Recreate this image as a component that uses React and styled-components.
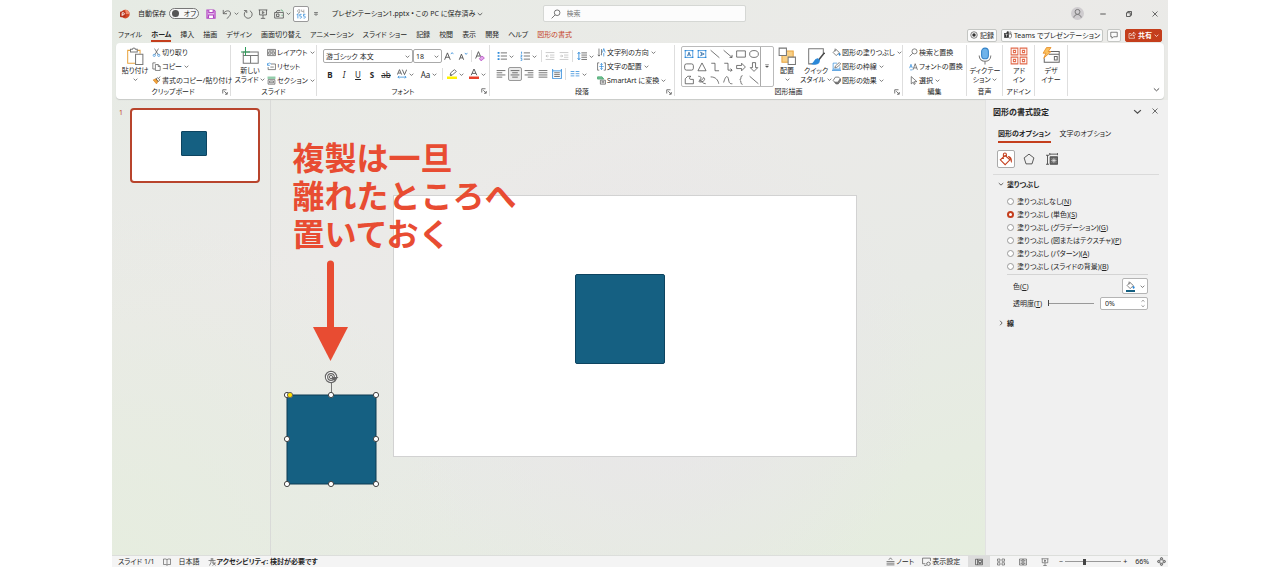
import { useState } from "react";
import styled, { createGlobalStyle } from "styled-components";

const gray = "#4a4a4a";
const blue = "#2b88d8";
const accent = "#c43e1c";

const tabs = [
  "ファイル",
  "ホーム",
  "挿入",
  "描画",
  "デザイン",
  "画面切り替え",
  "アニメーション",
  "スライド ショー",
  "記録",
  "校閲",
  "表示",
  "開発",
  "ヘルプ",
  "図形の書式",
];

const fills = [
  ["塗りつぶしなし", "N"],
  ["塗りつぶし (単色)", "S"],
  ["塗りつぶし (グラデーション)", "G"],
  ["塗りつぶし (図またはテクスチャ)", "P"],
  ["塗りつぶし (パターン)", "A"],
  ["塗りつぶし (スライドの背景)", "B"],
];

// every icon is drawn on a 16 x 16 grid
const icons = {
  logo: (
    <>
      <circle cx="8.5" cy="8" r="7" fill="#d24726" stroke="none" />
      <path d="M8.5 1a7 7 0 0 1 7 7h-7z" fill="#f08a6c" stroke="none" />
      <rect x="0" y="4" width="9" height="9" rx="1.5" fill="#b7311a" stroke="none" />
      <path d="M3.400 11V6h2a1.600 1.600 0 0 1 0 3.200h-2" stroke="#fff" strokeWidth="1.400" />
    </>
  ),
  save: (
    <g stroke="#b146c2" strokeWidth="1.8">
      <path d="M1.5 1.5h11l2 2v11h-13z" fill="#e3b5ea" />
      <path d="M4.5 1.5v4h7v-4M4 14.5V9.500h8v5" fill="#fff" />
    </g>
  ),
  undo: <path d="M2 1.500V7.500H8M2.300 7.200C6 1 14.500 2 13.500 8c-.5 3-3 5-6 7.500" />,
  redo: <path d="M1.500 2.500H6v4M4.500 3.500A6.300 6.300 0 1 0 11 2.800" />,
  present: <path d="M1 1.500h14M2.500 1.500v8h11v-8M8 9.500v5M4.500 15h7M7 4l3 1.700L7 7.300z" />,
  camera: (
    <>
      <path d="M1 5.500h14v9H1zM3 5.500l2-3h5M4 8h4v4H4z" />
      <path d="M11 1l4 3M12 10h2" stroke="#3a9a5c" />
    </>
  ),
  touch: (
    <>
      <path d="M6 1.500a2.200 2.200 0 1 0 0 3.500M6 1v2c0 3-1 4-3 4.500M9 1v3h3.500M12.500 1v6" stroke="#999" />
      <path d="M1 9l2-1v7M9 8.500H6v3c4-1 4 4 0 3M15 8.500h-3v3c4-1 4 4 0 3" stroke={blue} />
    </>
  ),
  find: <path d="M9.800 1.500a4.500 4.500 0 1 1 0 9 4.500 4.500 0 0 1 0-9zM6.500 9.500L1 15" />,
  person: (
    <>
      <circle cx="8" cy="8" r="8" fill="#cfcccf" stroke="none" />
      <circle cx="8" cy="6" r="3" stroke="#777" />
      <path d="M3.500 13c.5-5 8.500-5 9 0" stroke="#777" />
    </>
  ),
  minimize: <path d="M2.500 8h11" stroke="#333" strokeWidth="1.6" />,
  restore: <path d="M3 5.500h7.500V13H3zM5.500 5.500V3H13v7.500h-2.500" stroke="#333" strokeWidth="1.5" />,
  close: <path d="M3 3l10 10M13 3L3 13" stroke="#333" strokeWidth="1.4" />,
  paste: (
    <>
      <path d="M8 14.500H1.500V3H4M10 3h2.500v3" stroke="#e8a33d" />
      <path d="M4 4.500V2h1.700a1.400 1.400 0 0 1 2.700 0H10v2.500z" stroke="#777" />
      <path d="M8.500 6.500H15v9H8.500z" fill="#fff" stroke="#777" />
    </>
  ),
  cut: (
    <>
      <path d="M4.500 1l6.500 11M11.500 1L5 12" />
      <path d="M4 11a2 2 0 1 1 0 4 2 2 0 0 1 0-4zM12 11a2 2 0 1 1 0 4 2 2 0 0 1 0-4z" stroke={blue} />
    </>
  ),
  copy: <path d="M5.500 12.500h-4v-11h5M6 4.500h5l3.500 3.500v7H6zM11 4.500V8h3.500" />,
  painter: (
    <>
      <path d="M2 7l6 7 3-5-4-4z" fill="#f2a33a" stroke="#d8862a" />
      <path d="M7 5l3-2 4 4-3 3zM12 4l2.500-3" />
    </>
  ),
  newSlide: (
    <>
      <path d="M2 4.500h13.300v10H2zM2 7.500h13.300M8.500 7.500v7" stroke="#777" />
      <path d="M4 0v8M0 4.500h8" stroke="#2e9e5b" />
    </>
  ),
  layout: <path d="M1 2.500h14v11H1zM3 5h10M3 7h4v4H3zM9 7h4v4H9z" />,
  reset: (
    <>
      <path d="M7 3.500h8v10H2V9M6 9h6" />
      <path d="M1 5.500C2 1 6 1 7 4M1 2v4h4" stroke={blue} />
    </>
  ),
  section: (
    <>
      <path d="M2 6.500h12v8H2zM4.500 9h7v3h-7z" />
      <path d="M1 2h14M1 4h14" stroke="#2e9e5b" />
    </>
  ),
  growFont: (
    <>
      <path d="M1 14L5.500 3 10 14M2.700 10h5.600" strokeWidth="1.400" />
      <path d="M11 5l2-2.500L15 5" stroke={blue} />
    </>
  ),
  shrinkFont: (
    <>
      <path d="M2 14l3.500-9L9 14M3.400 11h4.400" strokeWidth="1.400" />
      <path d="M11 3l2 2.500L15 3" stroke={blue} />
    </>
  ),
  clearFont: (
    <>
      <path d="M1 12L5.500 1 9 9M2.700 8h5.600" strokeWidth="1.400" />
      <path d="M7 12l4-4 4 3-4 4H9z" fill="#e3a8ea" stroke="#b146c2" />
    </>
  ),
  spacing: (
    <>
      <path d="M.5 9L4 1l3.500 8M2 6.500h4M8.500 1L12 9l3.500-8" strokeWidth="1.300" />
      <path d="M1.500 13h13M3.500 11l-2 2 2 2M12.500 11l2 2-2 2" stroke={blue} />
    </>
  ),
  highlight: (
    <>
      <path d="M5 10l1-4 6-5 3 3-6 5zM5 10h3" />
      <path d="M0 14h16" stroke="#fff200" strokeWidth="4" />
    </>
  ),
  fontColor: (
    <>
      <path d="M3.500 10L8 0l4.500 10M5 7h6" strokeWidth="1.400" />
      <path d="M0 14h16" stroke="#e8402a" strokeWidth="4" />
    </>
  ),
  bullets: (
    <>
      <path d="M6 3h10M6 8h10M6 13h10" />
      <path d="M1 3h3M1 8h3M1 13h3" stroke={blue} strokeWidth="2.600" />
    </>
  ),
  numbers: (
    <>
      <path d="M6 3h10M6 8h10M6 13h10" />
      <path d="M1.500 2l1-.5v3M1 6.500h2v1.500l-2 1.500h2.500M1 12h2v3H1" stroke={blue} />
    </>
  ),
  outdent: <path d="M1 2.500h14M8 6.500h7M8 10h7M1 13.500h14M6 8H1.500M3.500 6l-2 2 2 2" stroke="#bbb" />,
  indent: <path d="M1 2.500h14M8 6.500h7M8 10h7M1 13.500h14M1.500 8H6M4 6l2 2-2 2" stroke="#bbb" />,
  lineSpacing: (
    <>
      <path d="M7 3h9M7 6.500h9M7 10h9M7 13.500h9" />
      <path d="M3 2v12M1 4.500L3 2l2 2.500M1 11.500L3 14l2-2.500" stroke={blue} strokeWidth="1.400" />
    </>
  ),
  left: <path d="M1 2.500h14M1 6h9M1 9.500h14M1 13h9" />,
  center: <path d="M1 2.500h14M3.500 6h9M1 9.500h14M3.500 13h9" />,
  right: <path d="M1 2.500h14M6 6h9M1 9.500h14M6 13h9" />,
  justify: <path d="M1 2.500h14M1 6h14M1 9.500h14M1 13h14" />,
  distribute: (
    <>
      <path d="M3.500 6h9M3.500 9h9M3.500 12h9" />
      <path d="M1 0v15.500h14V0M1 3h14" stroke={blue} strokeWidth="1.400" />
    </>
  ),
  columns: <path d="M1 4h6M1 7.500h6M1 11h6M9 4h6M9 7.500h6M9 11h6" stroke={blue} />,
  textDirection: (
    <>
      <path d="M3.500 1v13M1.500 12l2 2.500 2-2.500M8 2v11" />
      <path d="M9.500 8L12 1l2.500 7M12 9v6" stroke={blue} strokeWidth="1.300" />
    </>
  ),
  textAlign: (
    <>
      <path d="M4 1.500H1v13h3M12 1.500h3v13h-3" />
      <path d="M4 8h8M8 2.500v11M6 5l2-2.500L10 5M6 11l2 2.500 2-2.500" stroke={blue} />
    </>
  ),
  smartArt: (
    <>
      <path d="M1 1.500h8l3 4H1z" fill="#7bc29a" stroke="#2e9e5b" />
      <path d="M6 7.500h9v7H6zM8 10h5M8 12h5" fill="#fff" />
    </>
  ),
  textBox: (
    <>
      <path d="M2 2.500h12v11H2z" stroke={blue} />
      <path d="M5.500 11.500L8 5l2.500 6.500M6.500 9.500h3" stroke="#1a5c9c" />
      <path d="M1 1.500h2.500v2H1zM12.500 1.500H15v2h-2.500zM1 12.500h2.500v2H1zM12.500 12.500H15v2h-2.500z" fill={blue} stroke="none" />
    </>
  ),
  textBoxV: (
    <>
      <path d="M2 2.500h12v11H2z" stroke={blue} />
      <path d="M5 5l6.500 3L5 11M7 6v4" stroke="#1a5c9c" />
      <path d="M1 1.500h2.500v2H1zM12.500 1.500H15v2h-2.500zM1 12.500h2.500v2H1zM12.500 12.500H15v2h-2.500z" fill={blue} stroke="none" />
    </>
  ),
  line: <path d="M1 2l14 12" />,
  lineArrow: <path d="M1 2l13.500 11.500M14.500 9.500v4h-4" />,
  rect: <path d="M1 3h14v10H1z" />,
  oval: <ellipse cx="8" cy="8" rx="7" ry="5.500" />,
  roundRect: <rect x="1" y="3" width="14" height="10" rx="3" />,
  triangle: <path d="M8 1.500l6.500 12.500h-13z" />,
  elbow: <path d="M2 2h6v12h6.500" />,
  elbowArrow: <path d="M2 2h6v11h6.500M12 10.500l2.500 2.500-2.500 2.500" />,
  arrowRight: <path d="M1 5.500h8V2l6 6-6 6v-3.500H1z" />,
  arrowDown: <path d="M5.500 1v8H2l6 6 6-6h-3.500V1z" />,
  freeform: <path d="M2 14V6l4-4h5c-3 2-3 5 0 5h4v7z" />,
  scribble: <path d="M2 2c3 0 7 2 3 5-3 3 5 1 5-2s5 2 0 5-9 0-6-1c5 0 4 5 10 5" />,
  arc: <path d="M1 3c8 0 12 5 13 11" />,
  curve: <path d="M1 12C5-2 8 2 9 8s3 6 6 6" />,
  brace: <path d="M10.500 1C6 1 9.500 7 6 8c3.500 1 0 7 4.500 7" />,
  arrange: (
    <>
      <path d="M3.500 3.500h10v10h-10z" fill="#f8cf85" stroke="#e8a33d" />
      <path d="M1 1h6.500v6.500H1zM9 9h6.500v6.500H9z" fill="#fff" stroke="#777" />
    </>
  ),
  quickStyle: (
    <>
      <path d="M6 15H1.500V1.500h13V6" stroke="#777" />
      <path d="M15.500 5L10 12" strokeWidth="1.400" />
      <path d="M9.500 10.500c-3 0-2.500 3.500-5 4.500 3.500 1 6.500 0 6.500-3z" fill={blue} stroke={blue} />
    </>
  ),
  fill: (
    <>
      <path d="M7 2.500L13 8l-5.500 5.500L2 8zM5.500 1v5" />
      <path d="M13.500 9c2 3 1.500 4 0 4s-2-1 0-4z" fill={blue} stroke={blue} />
    </>
  ),
  outline: (
    <>
      <path d="M14 8v4.500H2V2h7" stroke={blue} />
      <path d="M5 10.500l1-3.500 7-6 2.500 2.500-7 6z" />
      <path d="M0 14.500h16" stroke={blue} strokeWidth="2" />
    </>
  ),
  effect: (
    <>
      <path d="M4 10l3 4h4l4-5V5" fill="#888" />
      <path d="M6 2h6l2.500 3-4 6H5L2 8z" fill="#fff" />
    </>
  ),
  replaceFont: (
    <>
      <path d="M7 14L11 3l4 11M8.500 10.500h5" />
      <path d="M1 11l2.500-7L6 11M2 8.500h3M2 14h4" stroke={blue} />
    </>
  ),
  select: <path d="M4 1v13l3.500-3 1.500 4 2-1-1.500-4H14z" />,
  mic: (
    <>
      <rect x="5" y="1" width="6" height="9.500" rx="3" fill="#6fb3ea" stroke="#2f7fc6" />
      <path d="M2.800 7.500c0 7 10.400 7 10.400 0M8 12.800V15.500" stroke="#777" />
    </>
  ),
  addin: <path d="M1 1h6v6H1zM9 1h6v6H9zM1 9h6v6H1zM9 9h6v6H9zM3 3h2v2H3zM11 3h2v2h-2zM3 11h2v2H3zM11 11h2v2h-2z" stroke="#e2694a" />,
  designer: (
    <>
      <path d="M6 4h9.300v9.500H2V10M6 6.500h9.300M11 8.500h2.500v3H11z" stroke="#666" />
      <path d="M4 .5h4L5.500 4H8l-6.500 6L3.500 5.500H1z" fill="#fbc15e" stroke="#e8902d" strokeWidth=".8" />
    </>
  ),
  record: (
    <>
      <circle cx="8" cy="8" r="6.500" stroke="#333" />
      <circle cx="8" cy="8" r="3.500" fill="#333" stroke="none" />
    </>
  ),
  teams: (
    <>
      <path d="M10 6h5v6c-1 2.500-4 2.500-6 1M11 2a2 2 0 1 1 0 3.500" />
      <circle cx="7.500" cy="3" r="2" fill="#333" />
      <rect x="1" y="5" width="8" height="8" fill="#333" stroke="#333" />
      <path d="M3 7h4M5 7v4.500" stroke="#fff" />
    </>
  ),
  comment: <path d="M1.500 2.500h13v9H7L4 14.500v-3H1.500z" stroke="#333" />,
  share: <path d="M6 5H2v9.500h11V11M5 10c1-4 4-5 6-5V2l4 4.500-4 4V8c-3 0-4.500 0-6 2z" stroke="#fff" />,
  bucket: (
    <>
      <path d="M7 4l5.500 5L7 14.500 1.500 9zM5 8V3c0-2.500 3.500-2.500 3.500 0v2.500" stroke={accent} />
      <path d="M10 4.500c3.500 0 5.500 3 4.500 8-1.500-1-1-4-2.500-5z" fill={accent} stroke="none" />
    </>
  ),
  pentagon: <path d="M8 1.500l6.500 5-2.500 8H4l-2.500-8z" />,
  sizeIcon: (
    <>
      <path d="M0 3h4M2 3v12M0 15h4M5 1.500h10.500M5 0v3M15.500 0v3" />
      <path d="M5.500 5h10v10h-10z" fill="#666" />
      <path d="M10.500 6.500v7M7 10h7M8 7.500l5 5M13 7.500l-5 5" stroke="#eee" strokeWidth=".8" />
    </>
  ),
  book: <path d="M1 2h5l2 1.500L10 2h5v11h-5l-2 1.500L6 13H1zM8 3.500v11" />,
  access: <path d="M6 2a2 2 0 1 1 4 0 2 2 0 0 1-4 0zM1 5h14M6 5v4l-3 6M10 5v4M8 10h7l-6 5M15 15l-5-6" />,
  notes: <path d="M5 5l3-3.500L11 5M1 8h14M1 11h14M1 14h14" />,
  display: <path d="M6 12H1V2h14v5M4 15h4M11.500 9l3 1.500v3l-3 1.500-3-1.500v-3z" />,
  normal: <path d="M1 2.500h14v11H1zM5 2.500v11M7 5h6v4H7zM7 11h6" stroke="#333" />,
  sorter: <path d="M1 2h5v4.500H1zM10 2h5v4.500h-5zM1 9.500h5V14H1zM10 9.500h5V14h-5z" />,
  reading: <path d="M1 2h7v12H1zM8 2h7v12H8zM3 5h3M3 8h3M3 11h3M10 5h3M10 8h3M10 11h3" />,
  fit: <path d="M8 0l2.500 3.500h-5zM8 16l2.500-3.500h-5zM0 8l3.500-2.500v5zM16 8l-3.500-2.500v5zM5 5h6v6H5z" />,
  chevron: <path d="M2 5.500L8 11l6-5.500" strokeWidth="2.200" />,
  overflow: <path d="M3 4h10M4 8l4 4 4-4z" strokeWidth="1.800" />,
  more: <path d="M3 4h10M4 8h8l-4 4z" fill={gray} />,
  launcher: <path d="M2 12V2h10M6 6l7 7M14 8v6H8" strokeWidth="2" />,
};

const Icon = ({ name, size = 10 }) => (
  <Svg viewBox="0 0 16 16" $size={size} aria-hidden="true">
    {icons[name]}
  </Svg>
);

const Chevron = () => <Icon name="chevron" size={5} />;

const Tool = ({ icon, children, menu }) => (
  <ToolButton>
    <Icon name={icon} size={9} />
    {children}
    {menu && <Chevron />}
  </ToolButton>
);

const Group = ({ title, width, pad, launcher, children }) => (
  <RibbonGroup $width={width}>
    <GroupBody $pad={pad}>{children}</GroupBody>
    <GroupTitle>
      <span>{title}</span>
      {launcher && (
        <Launcher aria-label={title}>
          <Icon name="launcher" size={6} />
        </Launcher>
      )}
    </GroupTitle>
  </RibbonGroup>
);

function TitleBar() {
  return (
    <Title>
      <QuickAccess>
        <Icon name="logo" />
        <AutoSave>
          自動保存
          <Switch>
            <input type="checkbox" role="switch" />
            オフ
          </Switch>
        </AutoSave>
        <Cell $width={16} aria-label="保存"><Icon name="save" /></Cell>
        <Cell $width={22} aria-label="元に戻す"><Icon name="undo" /><Chevron /></Cell>
        <Cell $width={14} aria-label="繰り返し"><Icon name="redo" /></Cell>
        <Cell $width={16} aria-label="スライドショー"><Icon name="present" /></Cell>
        <Cell $width={22} aria-label="挿入"><Icon name="camera" /><Chevron /></Cell>
        <Cell $width={16} $boxed aria-label="切り替え"><Icon name="touch" /></Cell>
        <Cell $width={14} aria-label="カスタマイズ"><Icon name="overflow" size={6} /></Cell>
        <FileName>
          プレゼンテーション1.pptx • この PC に保存済み
          <Icon name="chevron" size={6} />
        </FileName>
      </QuickAccess>
      <Search>
        <Icon name="find" />
        <input type="search" placeholder="検索" aria-label="検索" />
      </Search>
      <WindowButtons>
        <Cell $width={26} aria-label="アカウント"><Icon name="person" size={13} /></Cell>
        <Cell $width={26} aria-label="最小化"><Icon name="minimize" size={8} /></Cell>
        <Cell $width={26} aria-label="元のサイズ"><Icon name="restore" size={8} /></Cell>
        <Cell $width={26} aria-label="閉じる"><Icon name="close" size={8} /></Cell>
      </WindowButtons>
    </Title>
  );
}

function Tabs() {
  const [active, setActive] = useState("ホーム");
  return (
    <TabBar>
      {tabs.map((tab) => (
        <Tab
          key={tab}
          $active={active === tab}
          $context={tab === "図形の書式"}
          onClick={() => setActive(tab)}
        >
          {tab}
        </Tab>
      ))}
      <Spacer />
      <TopButtons>
        <TopButton><Icon name="record" size={8} />記録</TopButton>
        <TopButton><Icon name="teams" size={8} />Teams でプレゼンテーション</TopButton>
        <TopButton aria-label="コメント"><Icon name="comment" size={8} /></TopButton>
        <TopButton $primary><Icon name="share" size={8} />共有<Chevron /></TopButton>
      </TopButtons>
    </TabBar>
  );
}

function Ribbon() {
  const shapes = [
    "textBox", "textBoxV", "line", "lineArrow", "rect", "oval",
    "roundRect", "triangle", "elbow", "elbowArrow", "arrowRight", "arrowDown",
    "freeform", "scribble", "arc", "curve", "brace", "line",
  ];
  return (
    <RibbonBar>
      <Group title="クリップボード" width={115} pad={2} launcher>
        <BigButton $width={34}>
          <Icon name="paste" size={18} />
          <span>貼り付け</span>
          <Chevron />
        </BigButton>
        <Stack>
          <Tool icon="cut">切り取り</Tool>
          <Tool icon="copy" menu>コピー</Tool>
          <Tool icon="painter">書式のコピー/貼り付け</Tool>
        </Stack>
      </Group>
      <Group title="スライド" width={86} pad={2}>
        <BigButton $width={34}>
          <Icon name="newSlide" size={18} />
          <span>新しい</span>
          <span>スライド <Chevron /></span>
        </BigButton>
        <Stack>
          <Tool icon="layout" menu>レイアウト</Tool>
          <Tool icon="reset">リセット</Tool>
          <Tool icon="section" menu>セクション</Tool>
        </Stack>
      </Group>
      <Group title="フォント" width={173} pad={6} launcher>
        <Rows>
          <Row>
            <SelectBox $width={90}>
              <select aria-label="フォント"><option>游ゴシック 本文</option></select>
              <Chevron />
            </SelectBox>
            <SelectBox $width={29}>
              <select aria-label="サイズ"><option>18</option></select>
              <Chevron />
            </SelectBox>
            <Cell $width={14} aria-label="拡大"><Icon name="growFont" /></Cell>
            <Cell $width={14} aria-label="縮小"><Icon name="shrinkFont" /></Cell>
            <Divider />
            <Cell $width={14} aria-label="書式クリア"><Icon name="clearFont" /></Cell>
          </Row>
          <Row>
            <Cell $width={14}><b>B</b></Cell>
            <Cell $width={14}><i>I</i></Cell>
            <Cell $width={14}><u>U</u></Cell>
            <Cell $width={14}><b>S</b></Cell>
            <Cell $width={14}><s>ab</s></Cell>
            <Cell $width={24} aria-label="文字の間隔"><Icon name="spacing" /><Chevron /></Cell>
            <Cell $width={24}>Aa <Chevron /></Cell>
            <Divider />
            <Cell $width={22} aria-label="蛍光ペン"><Icon name="highlight" /><Chevron /></Cell>
            <Cell $width={22} aria-label="フォントの色"><Icon name="fontColor" /><Chevron /></Cell>
          </Row>
        </Rows>
      </Group>
      <Group title="段落" width={185} pad={4} launcher>
        <Rows $width={103}>
          <Row>
            <Cell $width={22} aria-label="箇条書き"><Icon name="bullets" /><Chevron /></Cell>
            <Cell $width={24} aria-label="段落番号"><Icon name="numbers" /><Chevron /></Cell>
            <Divider />
            <Cell $width={14} aria-label="インデントを減らす"><Icon name="outdent" /></Cell>
            <Cell $width={14} aria-label="インデントを増やす"><Icon name="indent" /></Cell>
            <Divider />
            <Cell $width={22} aria-label="行間"><Icon name="lineSpacing" /><Chevron /></Cell>
          </Row>
          <Row>
            <Cell $width={14} aria-label="左揃え"><Icon name="left" /></Cell>
            <Cell $width={14} $pressed aria-label="中央揃え"><Icon name="center" /></Cell>
            <Cell $width={14} aria-label="右揃え"><Icon name="right" /></Cell>
            <Cell $width={14} aria-label="両端揃え"><Icon name="justify" /></Cell>
            <Cell $width={14} aria-label="均等割り付け"><Icon name="distribute" /></Cell>
            <Divider />
            <Cell $width={22} aria-label="段組み"><Icon name="columns" /><Chevron /></Cell>
          </Row>
        </Rows>
        <Stack>
          <Tool icon="textDirection" menu>文字列の方向</Tool>
          <Tool icon="textAlign" menu>文字の配置</Tool>
          <Tool icon="smartArt" menu>SmartArt に変換</Tool>
        </Stack>
      </Group>
      <Group title="図形描画" width={228} pad={6} launcher>
        <Gallery>
          <ShapeGrid>
            {shapes.map((shape, i) => (
              <Cell key={i} $width={13} aria-label={shape}>
                <Icon name={shape} />
              </Cell>
            ))}
          </ShapeGrid>
          <GalleryMore aria-label="その他の図形"><Icon name="more" size={6} /></GalleryMore>
        </Gallery>
        <BigButton $width={26}>
          <Icon name="arrange" size={18} />
          <span>配置</span>
          <Chevron />
        </BigButton>
        <BigButton $width={32}>
          <Icon name="quickStyle" size={18} />
          <span>クイック</span>
          <span>スタイル <Chevron /></span>
        </BigButton>
        <Stack>
          <Tool icon="fill" menu>図形の塗りつぶし</Tool>
          <Tool icon="outline" menu>図形の枠線</Tool>
          <Tool icon="effect" menu>図形の効果</Tool>
        </Stack>
      </Group>
      <Group title="編集" width={64} pad={6}>
        <Stack>
          <Tool icon="find">検索と置換</Tool>
          <Tool icon="replaceFont">フォントの置換</Tool>
          <Tool icon="select" menu>選択</Tool>
        </Stack>
      </Group>
      <Group title="音声" width={36} pad={2}>
        <BigButton $width={32}>
          <Icon name="mic" size={18} />
          <span>ディクテー</span>
          <span>ション <Chevron /></span>
        </BigButton>
      </Group>
      <Group title="アドイン" width={32} pad={4}>
        <BigButton $width={24}>
          <Icon name="addin" size={18} />
          <span>アド</span>
          <span>イン</span>
        </BigButton>
      </Group>
      <Group title="" width={33} pad={4}>
        <BigButton $width={24}>
          <Icon name="designer" size={18} />
          <span>デザ</span>
          <span>イナー</span>
        </BigButton>
      </Group>
      <Spacer />
      <Collapse aria-label="リボンを折りたたむ"><Icon name="chevron" size={7} /></Collapse>
    </RibbonBar>
  );
}

const handles = [
  [44, 143], [88, 143], [44, 232], [133, 232], [133, 143], [88, 232], [44, 187], [133, 187],
];

function Canvas() {
  return (
    <Stage>
      <Slide>
        <SlideShape />
        <Note>
          複製は一旦
          <br />
          離れたところへ
          <br />
          置いておく
        </Note>
        <Drawing viewBox="0 0 150 240" aria-hidden="true">
          <path d="M87.500 12V80" stroke="#e84c32" strokeWidth="7" strokeLinecap="round" />
          <path d="M70 75h35l-17.500 34z" fill="#e84c32" />
          <path d="M88.500 129v14" stroke="#777" />
          <rect x="44" y="143" width="89" height="89" fill="#156082" stroke="#0d3a52" />
          <circle cx="88" cy="125" r="4.500" fill="none" stroke="#666" strokeWidth="3.400" />
          <circle cx="88" cy="125" r="4.500" fill="none" stroke="#fff" strokeWidth="1.200" />
          <path d="M86 125h9.500l-4 4z" fill="#666" />
          <circle cx="88" cy="125" r="1.600" fill="#eee" stroke="#666" />
          {handles.map(([x, y]) => (
            <circle key={`${x}-${y}`} cx={x} cy={y} r="2.600" fill="#fff" stroke="#444" />
          ))}
          <circle cx="47" cy="143" r="2.600" fill="#ffe100" stroke="#666" />
        </Drawing>
      </Slide>
    </Stage>
  );
}

function FormatPane() {
  const [fill, setFill] = useState("S");
  return (
    <Pane>
      <PaneHeader>
        <h2>図形の書式設定</h2>
        <Cell $width={18} aria-label="オプション"><Icon name="chevron" size={9} /></Cell>
        <Cell $width={18} aria-label="閉じる"><Icon name="close" size={8} /></Cell>
      </PaneHeader>
      <PaneTabs>
        <PaneTab $active>図形のオプション</PaneTab>
        <PaneTab>文字のオプション</PaneTab>
      </PaneTabs>
      <PaneIcons>
        <PaneIcon $active aria-label="塗りつぶしと線"><Icon name="bucket" size={14} /></PaneIcon>
        <PaneIcon aria-label="効果"><Icon name="pentagon" size={12} /></PaneIcon>
        <PaneIcon aria-label="サイズとプロパティ"><Icon name="sizeIcon" size={12} /></PaneIcon>
      </PaneIcons>
      <Section>
        <SectionTitle $open><Icon name="chevron" size={6} />塗りつぶし</SectionTitle>
        <Options>
          {fills.map(([text, key]) => (
            <Option key={key}>
              <input type="radio" name="fill" checked={fill === key} onChange={() => setFill(key)} />
              <span>
                {text}(<u>{key}</u>)
              </span>
            </Option>
          ))}
        </Options>
        <Field $height={22}>
          <span>色(<u>C</u>)</span>
          <ColorButton aria-label="色">
            <ColorMark><Icon name="fill" size={9} /></ColorMark>
            <Chevron />
          </ColorButton>
        </Field>
        <Field $height={12}>
          <label htmlFor="alpha">透明度(<u>T</u>)</label>
          <Range type="range" min="0" max="100" defaultValue="0" $width={46} aria-label="透明度" />
          <Spinner>
            <input id="alpha" defaultValue="0%" />
            <span>
              <Icon name="chevron" size={4} />
              <Icon name="chevron" size={4} />
            </span>
          </Spinner>
        </Field>
        <SectionTitle $spaced><Icon name="chevron" size={6} />線</SectionTitle>
      </Section>
    </Pane>
  );
}

function StatusBar() {
  return (
    <Status>
      <span>スライド 1/1</span>
      <Icon name="book" size={8} />
      <span>日本語</span>
      <StatusItem $bold><Icon name="access" size={8} />アクセシビリティ: 検討が必要です</StatusItem>
      <Spacer />
      <StatusItem><Icon name="notes" size={9} />ノート</StatusItem>
      <StatusItem><Icon name="display" size={9} />表示設定</StatusItem>
      <Views>
        <View $active aria-label="標準"><Icon name="normal" size={8} /></View>
        <View aria-label="スライド一覧"><Icon name="sorter" size={8} /></View>
        <View aria-label="閲覧表示"><Icon name="reading" size={8} /></View>
        <View aria-label="スライドショー"><Icon name="present" size={8} /></View>
        <Zoom>
          −
          <Range type="range" min="0" max="100" defaultValue="33" $width={56} $thumb={3} aria-label="ズーム" />
          +
        </Zoom>
      </Views>
      <span>66%</span>
      <Icon name="fit" size={9} />
    </Status>
  );
}

function App() {
  return (
    <Page>
      <GlobalStyle />
      <Window>
        <TitleBar />
        <Tabs />
        <Ribbon />
        <Workspace>
          <Thumbnails>
            <span>1</span>
            <Thumb aria-label="スライド 1"><i /></Thumb>
          </Thumbnails>
          <Canvas />
          <FormatPane />
        </Workspace>
        <StatusBar />
      </Window>
    </Page>
  );
}

const GlobalStyle = createGlobalStyle`
  * {
    box-sizing: border-box;
  }
  body {
    margin: 0;
    background: #fff;
    color: #262626;
    font: 7px/9px "Noto Sans", "Noto Sans CJK JP", sans-serif;
    font-feature-settings: "palt";
    white-space: nowrap;
  }
  button, input, select {
    margin: 0;
    padding: 0;
    border: 0;
    background: none;
    color: inherit;
    font: inherit;
    font-feature-settings: inherit;
    outline: 0;
  }
  h2 {
    margin: 0;
  }
`;

const Svg = styled.svg`
  flex: none;
  width: ${(p) => p.$size}px;
  height: ${(p) => p.$size}px;
  fill: none;
  stroke: ${gray};
  stroke-width: ${(p) => (p.$size > 14 ? 0.9 : 1.2)};
`;

const Page = styled.div`
  padding: 0 112px;
`;

const Window = styled.div`
  display: flex;
  flex-direction: column;
  height: 100vh;
  background:
    radial-gradient(circle at 52% 66%, #e9e6e9 0, rgba(233, 230, 233, 0) 40%),
    radial-gradient(circle at 0 100%, #e6eddf 0, rgba(230, 237, 223, 0) 30%),
    linear-gradient(160deg, #e6ebe4 0%, #ebeae8 35%, #e8eae6 60%, #e4eedc 100%);
`;

const Spacer = styled.div`
  flex: 1;
`;

const Title = styled.header`
  display: grid;
  grid-template-columns: 1fr 203px 1fr;
  align-items: center;
  height: 27px;
  padding-left: 8px;
`;

const QuickAccess = styled.div`
  display: flex;
  align-items: center;
`;

const AutoSave = styled.div`
  display: flex;
  align-items: center;
  gap: 3px;
  margin: 0 4px 0 8px;
`;

const Switch = styled.label`
  display: flex;
  align-items: center;
  gap: 5px;
  width: 30px;
  height: 11px;
  padding: 0 2px;
  border: 1px solid #777;
  border-radius: 6px;
  background: #f7f7f7;
  input {
    appearance: none;
    width: 7px;
    height: 7px;
    border-radius: 50%;
    background: #555;
  }
`;

const Cell = styled.button`
  display: flex;
  flex: none;
  align-items: center;
  justify-content: center;
  gap: 2px;
  width: ${(p) => p.$width}px;
  height: ${(p) => (p.$boxed ? 16 : 14)}px;
  border: ${(p) => (p.$boxed || p.$pressed ? "1px solid #999" : 0)};
  border-radius: 2px;
  background: ${(p) => (p.$boxed ? "#fff" : p.$pressed ? "#ebebeb" : "none")};
  font-size: 8px;
`;

const FileName = styled.div`
  display: flex;
  align-items: center;
  gap: 2px;
  margin-left: 9px;
`;

const Search = styled.label`
  display: flex;
  align-items: center;
  gap: 6px;
  height: 17px;
  padding: 0 7px;
  border: 1px solid #d5d7d4;
  border-radius: 2px;
  background: #fcfcfc;
  input {
    flex: 1;
    min-width: 0;
  }
`;

const WindowButtons = styled.div`
  display: flex;
  justify-content: flex-end;
`;

const TabBar = styled.nav`
  display: flex;
  align-items: center;
  gap: 9px;
  height: 16px;
  padding: 0 6px;
`;

const Tab = styled.button`
  height: 13px;
  border-bottom: 2px solid ${(p) => (p.$active ? accent : "transparent")};
  color: ${(p) => (p.$context ? accent : "inherit")};
  font-weight: ${(p) => (p.$active ? 700 : 400)};
`;

const TopButtons = styled.div`
  display: flex;
  gap: 4px;
`;

const TopButton = styled.button`
  display: flex;
  align-items: center;
  gap: 2px;
  height: 13px;
  padding: 0 2px;
  border: 1px solid ${(p) => (p.$primary ? accent : "#c4c6c3")};
  border-radius: 2px;
  background: ${(p) => (p.$primary ? accent : "#fbfbfb")};
  color: ${(p) => (p.$primary ? "#fff" : "inherit")};
  font-weight: ${(p) => (p.$primary ? 700 : 400)};
  svg {
    stroke: ${(p) => (p.$primary ? "#fff" : gray)};
  }
`;

const RibbonBar = styled.div`
  display: flex;
  flex: none;
  height: 56px;
  margin: 0 4px;
  padding-top: 2px;
  border-radius: 4px;
  background: #fff;
  box-shadow: 0 1px 1px #c8cac7;
`;

const RibbonGroup = styled.section`
  display: flex;
  flex: none;
  flex-direction: column;
  width: ${(p) => p.$width}px;
  margin-bottom: 3px;
  border-right: 1px solid #dedede;
`;

const GroupBody = styled.div`
  display: flex;
  height: 42px;
  padding-left: ${(p) => p.$pad}px;
`;

const GroupTitle = styled.div`
  display: grid;
  grid-template-columns: 1fr auto 1fr;
  align-items: center;
  height: 10px;
  span {
    grid-column: 2;
  }
`;

const Launcher = styled.button`
  display: flex;
  justify-self: end;
  padding-right: 2px;
`;

const BigButton = styled.button`
  display: flex;
  flex: none;
  flex-direction: column;
  align-items: center;
  width: ${(p) => p.$width}px;
  padding-top: 2px;
  line-height: 8px;
  span {
    margin-top: 1px;
  }
  svg + span {
    margin-top: 2px;
  }
  > svg:last-child {
    margin-top: 2px;
  }
`;

const Stack = styled.div`
  display: flex;
  flex-direction: column;
`;

const ToolButton = styled.button`
  display: flex;
  align-items: center;
  gap: 2px;
  height: 14px;
  svg:first-child {
    margin-right: -1px;
  }
`;

const Rows = styled.div`
  display: flex;
  flex-direction: column;
  gap: 2px;
  width: ${(p) => (p.$width ? `${p.$width}px` : "auto")};
  padding-top: 3px;
`;

const Row = styled.div`
  display: flex;
  align-items: center;
  height: 16px;
`;

const Divider = styled.div`
  flex: none;
  width: 1px;
  height: 12px;
  margin: 0 1px;
  background: #ddd;
`;

const SelectBox = styled.div`
  display: flex;
  align-items: center;
  width: ${(p) => p.$width}px;
  height: 14px;
  padding: 0 2px;
  border: 1px solid #aaa;
  border-radius: 2px;
  select {
    flex: 1;
    min-width: 0;
    appearance: none;
  }
`;

const Gallery = styled.div`
  display: flex;
  height: 41px;
  margin-top: 1px;
  border: 1px solid #bbb;
  border-radius: 2px;
`;

const ShapeGrid = styled.div`
  display: grid;
  grid-template-columns: repeat(6, 13px);
  grid-auto-rows: 13px;
  align-items: center;
`;

const GalleryMore = styled.button`
  width: 13px;
  border-left: 1px solid #aaa;
`;

const Collapse = styled.button`
  align-self: flex-end;
  padding: 4px;
`;

const Workspace = styled.main`
  display: flex;
  flex: 1;
  min-height: 0;
  margin-top: 1px;
`;

const Thumbnails = styled.aside`
  display: flex;
  flex: none;
  gap: 7px;
  width: 159px;
  padding: 8px 0 0 7px;
  border-right: 1px solid #d9dad8;
  color: ${accent};
`;

const Thumb = styled.button`
  display: flex;
  align-items: center;
  justify-content: center;
  width: 130px;
  height: 75px;
  border: 2px solid #b8442c;
  border-radius: 4px;
  background: #fff;
  i {
    width: 26px;
    height: 25px;
    margin: 0 2px 4px 0;
    border: 1px solid #0d4460;
    border-radius: 1px;
    background: #156082;
  }
`;

const Stage = styled.div`
  display: flex;
  flex: 1;
  align-items: center;
  justify-content: center;
  min-width: 0;
  padding: 0 7px 4px 0;
`;

const Slide = styled.div`
  position: relative;
  flex: none;
  width: 464px;
  height: 262px;
  border: 1px solid #d2d2d2;
  background: #fff;
`;

const SlideShape = styled.div`
  position: absolute;
  top: 78px;
  left: 181px;
  width: 90px;
  height: 90px;
  border: 1px solid #0d4460;
  border-radius: 2px;
  background: #156082;
`;

const Note = styled.div`
  position: absolute;
  top: -56px;
  left: -101px;
  color: #e84c32;
  font: 700 32px/38px "Liberation Sans", "Noto Sans CJK JP", sans-serif;
  font-feature-settings: normal;
`;

const Drawing = styled.svg`
  position: absolute;
  top: 56px;
  left: -151px;
  width: 150px;
  height: 240px;
`;

const Pane = styled.aside`
  flex: none;
  width: 183px;
  padding-left: 7px;
  border-left: 1px solid #e2e2e2;
  background: #f0f0f0;
`;

const PaneHeader = styled.div`
  display: flex;
  align-items: center;
  height: 22px;
  padding-right: 4px;
  h2 {
    flex: 1;
    font-size: 8px;
  }
`;

const PaneTabs = styled.div`
  display: flex;
  gap: 9px;
  padding: 4px 5px 3px;
`;

const PaneTab = styled.button`
  height: 17px;
  border-bottom: 2px solid ${(p) => (p.$active ? accent : "transparent")};
  font-weight: ${(p) => (p.$active ? 700 : 400)};
`;

const PaneIcons = styled.div`
  display: flex;
  gap: 5px;
  height: 29px;
  margin-right: 9px;
  padding: 4px;
  border-bottom: 1px solid #dadada;
`;

const PaneIcon = styled.button`
  display: flex;
  align-items: center;
  justify-content: center;
  width: 18px;
  height: 18px;
  border: 1px solid ${(p) => (p.$active ? "#aaa" : "transparent")};
  border-radius: 2px;
  background: ${(p) => (p.$active ? "#fff" : "none")};
`;

const Section = styled.section`
  padding: 4px 20px 0 5px;
`;

const SectionTitle = styled.button`
  display: flex;
  align-items: center;
  gap: 3px;
  height: 10px;
  margin-top: ${(p) => (p.$spaced ? 9 : 0)}px;
  font-weight: 700;
  svg {
    transform: ${(p) => (p.$open ? "none" : "rotate(-90deg)")};
  }
`;

const Options = styled.div`
  margin-left: 9px;
  padding: 6px 0 1px;
  border-bottom: 1px solid #d4d4d4;
`;

const Option = styled.label`
  display: flex;
  align-items: center;
  gap: 3px;
  height: 13px;
  input {
    appearance: none;
    width: 7px;
    height: 7px;
    border: 1px solid #999;
    border-radius: 50%;
    background: #fff;
  }
  input:checked {
    border: 2px solid ${accent};
  }
`;

const Field = styled.div`
  display: flex;
  align-items: center;
  justify-content: space-between;
  height: ${(p) => p.$height}px;
  padding-left: 15px;
`;

const ColorButton = styled.button`
  display: flex;
  align-items: center;
  justify-content: center;
  gap: 5px;
  width: 26px;
  height: 16px;
  border: 1px solid #b4b4b4;
  border-radius: 2px;
  background: #fff;
`;

const ColorMark = styled.span`
  display: flex;
  border-bottom: 2px solid #156082;
`;

const Range = styled.input`
  appearance: none;
  width: ${(p) => p.$width}px;
  height: 8px;
  background: linear-gradient(#999, #999) center / 100% 1px no-repeat;
  &::-webkit-slider-thumb {
    appearance: none;
    width: ${(p) => p.$thumb || 1}px;
    height: 6px;
    background: #444;
  }
`;

const Spinner = styled.div`
  display: flex;
  align-items: center;
  width: 48px;
  height: 13px;
  padding: 0 2px 0 4px;
  border: 1px solid #b4b4b4;
  border-radius: 2px;
  background: #fff;
  input {
    flex: 1;
    min-width: 0;
  }
  span {
    display: flex;
    flex-direction: column;
    gap: 1px;
  }
  svg:first-child {
    transform: rotate(180deg);
  }
`;

const Status = styled.footer`
  display: flex;
  align-items: center;
  gap: 8px;
  height: 12px;
  padding: 0 2px 0 6px;
  border-top: 1px solid #dcdedb;
  background: #f4f4f4;
`;

const StatusItem = styled.button`
  display: flex;
  align-items: center;
  gap: 1px;
  font-weight: ${(p) => (p.$bold ? 700 : 400)};
`;

const Views = styled.div`
  display: flex;
  align-items: center;
`;

const View = styled.button`
  display: flex;
  align-items: center;
  justify-content: center;
  width: 22px;
  height: 11px;
  background: ${(p) => (p.$active ? "#dcdcdc" : "none")};
`;

const Zoom = styled.div`
  display: flex;
  align-items: center;
  gap: 2px;
  padding-left: 3px;
`;

export default App;
